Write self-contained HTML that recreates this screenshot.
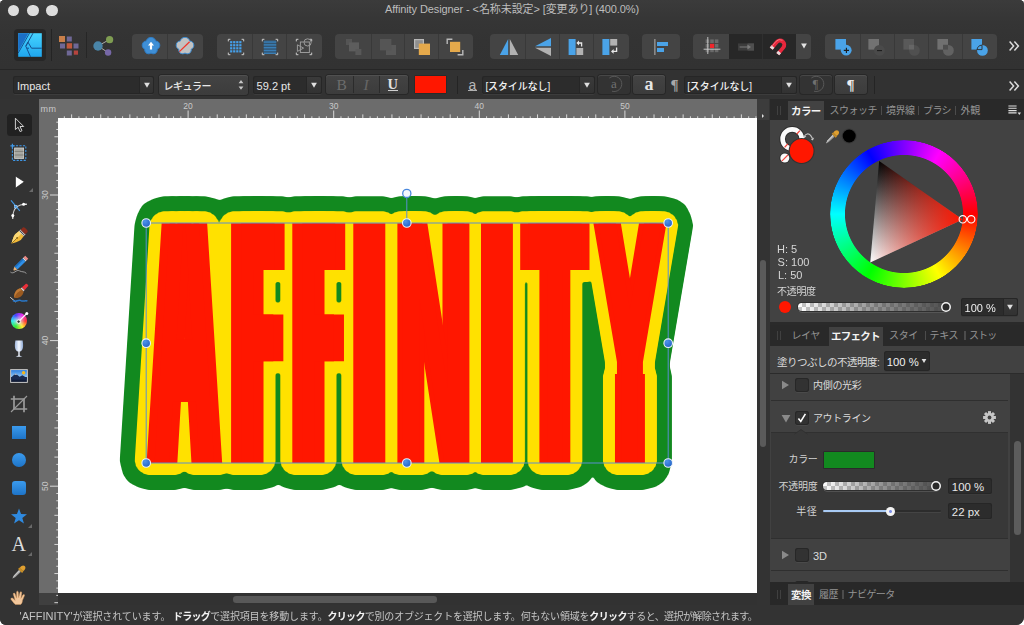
<!DOCTYPE html>
<html lang="ja"><head><meta charset="utf-8"><title>Affinity Designer</title>
<style>
html,body{margin:0;padding:0;background:#fff;}
body{width:1024px;height:625px;overflow:hidden;font-family:"Liberation Sans","Noto Sans CJK JP",sans-serif;}
#win{position:relative;width:1024px;height:625px;background:#333;border-radius:4.5px 4.5px 8px 6px;overflow:hidden;}
.abs{position:absolute;}
.t{position:absolute;white-space:nowrap;line-height:1;}
svg{display:block;overflow:visible}
.fld{background:#2c2c2c;border-radius:2.5px;box-shadow:inset 0 0 0 1px #262626,0 1px 0 #3c3c3c;}
.farr{background:linear-gradient(#3a3a3a,#323232);border-left:1px solid #262626;border-radius:0 2px 2px 0;box-sizing:border-box}
.rbtn{background:linear-gradient(#434343,#3c3c3c);border-radius:3px;box-shadow:inset 0 1px 0 #505050,0 0 0 1px #272727;}
.dbtn{background:#333;border-radius:3px;box-shadow:inset 0 1px 0 #474747,0 0 0 1px #272727;}
.chk{background:linear-gradient(90deg,rgba(62,62,62,0) 0,rgba(62,62,62,.55) 50%,rgba(62,62,62,.93) 100%),repeating-conic-gradient(#c6c6c6 0 25%,#fff 0 50%) 0 0/8px 8px;box-shadow:0 0 0 1px #2f2f2f,0 2px 0 -0.5px #6a6a6a;}
#status b{color:#f4f4f4;font-weight:bold}

</style></head>
<body>
<div id="win">
<div class="abs" style="left:0;top:0;width:1024px;height:69px;background:linear-gradient(#3b3b3b,#353535 22px,#333 40px,#323232)"></div>
<div class="abs" style="left:7.7px;top:4.7px;width:11.8px;height:11.8px;border-radius:50%;background:#dddddd"></div>
<div class="abs" style="left:26.8px;top:4.7px;width:11.8px;height:11.8px;border-radius:50%;background:#dddddd"></div>
<div class="abs" style="left:46px;top:4.7px;width:11.8px;height:11.8px;border-radius:50%;background:#dddddd"></div>
<div class="t" id="title" style="left:0;width:1024px;text-align:center;top:4px;font-size:11px;color:#bdbdbd;letter-spacing:-0.1px">Affinity Designer - &lt;名称未設定&gt; [変更あり] (400.0%)</div>
<div class="abs" style="left:0;top:69px;width:1024px;height:1px;background:#262626"></div>
<div class="abs" style="left:0;top:70px;width:1024px;height:29px;background:#323232"></div>

<div class="abs" style="left:13.5px;top:29px;width:32px;height:32px;background:#262626;border-radius:4px"></div>
<svg class="abs" style="left:17.7px;top:33.2px" width="24" height="24" viewBox="-12.0 -12.0 24 24"><defs><linearGradient id="pg" x1="0" y1="0" x2="0" y2="1"><stop offset="0" stop-color="#46d4ff"/><stop offset="1" stop-color="#1fa6ee"/></linearGradient></defs>
<rect x="-11.8" y="-11.8" width="23.6" height="23.6" fill="url(#pg)"/>
<path d="M-11.8 -11.8H-1.5L-11.8 6.5Z" fill="#1b6fc6"/>
<path d="M-11.8 8L-0.5 -11.8M3 -11.8L-4.2 1.2L0.5 11.8M-4.2 1.2L-2 -2.8L1.5 3.2H11.8M-1 3.2H-3.2" fill="none" stroke="#14508f" stroke-width="1" stroke-linejoin="round"/></svg>
<div class="abs" style="left:50.8px;top:29px;width:1px;height:32px;background:#242424"></div>
<div class="abs" style="left:85.6px;top:32px;width:1px;height:26px;background:#262626"></div>
<svg class="abs" style="left:58.2px;top:34.5px" width="22" height="22" viewBox="-11.0 -11.0 22 22"><rect x="-10" y="-10" width="6" height="6" fill="#c87f4a"/><rect x="-2.2" y="-9.5" width="5" height="5" fill="#6f6896"/><rect x="-9" y="-2.5" width="5" height="5" fill="#6f6896"/><rect x="-2.3" y="-2.8" width="5.4" height="5.4" fill="#c0593c"/><rect x="4.5" y="-2.5" width="5" height="5" fill="#6f6896"/><rect x="-2.2" y="4.5" width="5" height="5" fill="#6f6896"/><rect x="4.8" y="4.5" width="4.2" height="4.2" fill="#b5443e"/></svg>
<svg class="abs" style="left:91.5px;top:34.5px" width="22" height="22" viewBox="-11.0 -11.0 22 22"><path d="M-5 0L6.5 -6.5M-5 0L5 6.5" stroke="#aaa" stroke-width="1" fill="none"/>
<circle cx="-5" cy="0" r="4.7" fill="#4a85a8"/><circle cx="6.6" cy="-6.3" r="3.6" fill="#7f9d52"/><circle cx="5.1" cy="6.5" r="3.2" fill="#7667a6"/></svg>
<div class="abs" style="left:132px;top:34px;width:71px;height:25px;background:#444444;border-radius:4px"></div>
<div class="abs" style="left:167.0px;top:34px;width:1px;height:25px;background:#393939"></div>
<svg class="abs" style="left:140.8px;top:36.2px" width="20" height="20" viewBox="-10.0 -10.0 20 20"><path d="M0 -8.6C2.6 -8.6 4.4 -7 4.6 -5C7 -5 8.8 -3.2 8.8 -0.8C8.8 1.2 7.6 2.6 6.2 3.2C6.6 5.8 4.8 7.8 2.4 7.8C1.4 7.8 0.6 7.5 0 7C-0.6 7.5 -1.4 7.8 -2.4 7.8C-4.8 7.8 -6.6 5.8 -6.2 3.2C-7.6 2.6 -8.8 1.2 -8.8 -0.8C-8.8 -3.2 -7 -5 -4.6 -5C-4.4 -7 -2.6 -8.6 0 -8.6Z" fill="#3f8fd6" stroke="#2f7cc4" stroke-width="1"/><path d="M0 -4.2L3 -0.4H1.1V3.6H-1.1V-0.4H-3Z" fill="#fff"/></svg>
<svg class="abs" style="left:174.8px;top:36.2px" width="20" height="20" viewBox="-10.0 -10.0 20 20"><path d="M0 -8.6C2.6 -8.6 4.4 -7 4.6 -5C7 -5 8.8 -3.2 8.8 -0.8C8.8 1.2 7.6 2.6 6.2 3.2C6.6 5.8 4.8 7.8 2.4 7.8C1.4 7.8 0.6 7.5 0 7C-0.6 7.5 -1.4 7.8 -2.4 7.8C-4.8 7.8 -6.6 5.8 -6.2 3.2C-7.6 2.6 -8.8 1.2 -8.8 -0.8C-8.8 -3.2 -7 -5 -4.6 -5C-4.4 -7 -2.6 -8.6 0 -8.6Z" fill="#c2c2c2" stroke="#3f8fd6" stroke-width="1"/><path d="M-5.6 5.6L4.6 -4.2" stroke="#f0352b" stroke-width="1.3"/></svg>
<div class="abs" style="left:216.5px;top:34px;width:105.0px;height:25px;background:#444444;border-radius:4px"></div>
<div class="abs" style="left:252.0px;top:34px;width:1px;height:25px;background:#393939"></div>
<div class="abs" style="left:286.0px;top:34px;width:1px;height:25px;background:#393939"></div>
<svg class="abs" style="left:226.2px;top:36.5px" width="20" height="20" viewBox="-10.0 -10.0 20 20"><path d="M-7.7 -5.6V-7.7H-5.6M5.6 -7.7H7.7V-5.6M7.7 5.6V7.7H5.6M-5.6 7.7H-7.7V5.6" fill="none" stroke="#cdcdcd" stroke-width="1"/><rect x="-5.90" y="-5.90" width="2.2" height="2.2" fill="#45a0ea"/><rect x="-5.90" y="-2.85" width="2.2" height="2.2" fill="#45a0ea"/><rect x="-5.90" y="0.20" width="2.2" height="2.2" fill="#45a0ea"/><rect x="-5.90" y="3.25" width="2.2" height="2.2" fill="#45a0ea"/><rect x="-2.85" y="-5.90" width="2.2" height="2.2" fill="#45a0ea"/><rect x="-2.85" y="-2.85" width="2.2" height="2.2" fill="#45a0ea"/><rect x="-2.85" y="0.20" width="2.2" height="2.2" fill="#45a0ea"/><rect x="-2.85" y="3.25" width="2.2" height="2.2" fill="#45a0ea"/><rect x="0.20" y="-5.90" width="2.2" height="2.2" fill="#45a0ea"/><rect x="0.20" y="-2.85" width="2.2" height="2.2" fill="#45a0ea"/><rect x="0.20" y="0.20" width="2.2" height="2.2" fill="#45a0ea"/><rect x="0.20" y="3.25" width="2.2" height="2.2" fill="#45a0ea"/><rect x="3.25" y="-5.90" width="2.2" height="2.2" fill="#45a0ea"/><rect x="3.25" y="-2.85" width="2.2" height="2.2" fill="#45a0ea"/><rect x="3.25" y="0.20" width="2.2" height="2.2" fill="#45a0ea"/><rect x="3.25" y="3.25" width="2.2" height="2.2" fill="#45a0ea"/></svg>
<svg class="abs" style="left:260.0px;top:36.5px" width="20" height="20" viewBox="-10.0 -10.0 20 20"><path d="M-7.7 -5.6V-7.7H-5.6M5.6 -7.7H7.7V-5.6M7.7 5.6V7.7H5.6M-5.6 7.7H-7.7V5.6" fill="none" stroke="#cdcdcd" stroke-width="1"/><rect x="-6.3" y="-6.3" width="12.6" height="12.6" fill="#2f4356"/><rect x="-6.3" y="-6.20" width="12.6" height="0.8" fill="#3d8fd0"/><rect x="-6.3" y="-4.65" width="12.6" height="0.8" fill="#3d8fd0"/><rect x="-6.3" y="-3.10" width="12.6" height="0.8" fill="#3d8fd0"/><rect x="-6.3" y="-1.55" width="12.6" height="0.8" fill="#3d8fd0"/><rect x="-6.3" y="0.00" width="12.6" height="0.8" fill="#3d8fd0"/><rect x="-6.3" y="1.55" width="12.6" height="0.8" fill="#3d8fd0"/><rect x="-6.3" y="3.10" width="12.6" height="0.8" fill="#3d8fd0"/><rect x="-6.3" y="4.65" width="12.6" height="0.8" fill="#3d8fd0"/><rect x="-6.3" y="6.20" width="12.6" height="0.8" fill="#3d8fd0"/></svg>
<svg class="abs" style="left:293.6px;top:36.5px" width="20" height="20" viewBox="-10.0 -10.0 20 20"><path d="M-7.7 -5.6V-7.7H-5.6M5.6 -7.7H7.7V-5.6M7.7 5.6V7.7H5.6M-5.6 7.7H-7.7V5.6" fill="none" stroke="#cdcdcd" stroke-width="1"/><g fill="none" stroke="#9a9a9a" stroke-width="1"><rect x="-3.6" y="-5" width="9" height="10.5"/><circle cx="3.6" cy="-4.6" r="3.6"/><path d="M-6.6 -2.2V4.4L-0.4 1.1Z"/></g></svg>
<div class="abs" style="left:335px;top:34px;width:138px;height:25px;background:#444444;border-radius:4px"></div>
<div class="abs" style="left:370.5px;top:34px;width:1px;height:25px;background:#393939"></div>
<div class="abs" style="left:404.1px;top:34px;width:1px;height:25px;background:#393939"></div>
<div class="abs" style="left:438.0px;top:34px;width:1px;height:25px;background:#393939"></div>
<svg class="abs" style="left:344.0px;top:36.5px" width="20" height="20" viewBox="-10.0 -10.0 20 20"><rect x="-8" y="-8" width="6" height="6" fill="#555"/><rect x="-5" y="-4.6" width="10" height="9" fill="#5d5d5d"/><rect x="1.4" y="2" width="6" height="6" fill="#585858"/></svg>
<svg class="abs" style="left:377.8px;top:36.5px" width="20" height="20" viewBox="-10.0 -10.0 20 20"><rect x="-2" y="-2" width="10" height="10" fill="#585858"/><rect x="-8" y="-8" width="11.4" height="11.4" fill="#555555"/></svg>
<svg class="abs" style="left:411.5px;top:36.5px" width="20" height="20" viewBox="-10.0 -10.0 20 20"><rect x="-8" y="-8" width="10" height="10" fill="#b9b9b9"/><rect x="-6.8" y="-6.8" width="7.6" height="7.6" fill="#8f8f8f"/><rect x="-3.2" y="-3.4" width="11.2" height="11.4" fill="#e5a94b"/></svg>
<svg class="abs" style="left:445.2px;top:36.5px" width="20" height="20" viewBox="-10.0 -10.0 20 20"><path d="M-7.8 -3V-7.8H-2.6M7.8 3V7.8H2.6" fill="none" stroke="#b9b9b9" stroke-width="1.4"/><rect x="-5" y="-5.2" width="10.2" height="10.2" fill="#e5a94b"/></svg>
<div class="abs" style="left:490px;top:34px;width:138.5px;height:25px;background:#444444;border-radius:4px"></div>
<div class="abs" style="left:525.0px;top:34px;width:1px;height:25px;background:#393939"></div>
<div class="abs" style="left:559.0px;top:34px;width:1px;height:25px;background:#393939"></div>
<div class="abs" style="left:593.0px;top:34px;width:1px;height:25px;background:#393939"></div>
<svg class="abs" style="left:499.0px;top:36.5px" width="20" height="20" viewBox="-10.0 -10.0 20 20"><path d="M-0.8 -8V8H-9.2Z" fill="#4aa3e8"/><path d="M0.8 -8V8H9.2Z" fill="#b2b2b2"/></svg>
<svg class="abs" style="left:533.2px;top:36.8px" width="20" height="20" viewBox="-10.0 -10.0 20 20"><path d="M8 -0.8H-8L8 -9Z" fill="#4aa3e8"/><path d="M8 0.8H-8L8 9Z" fill="#b2b2b2"/></svg>
<svg class="abs" style="left:566.0px;top:36.5px" width="20" height="20" viewBox="-10.0 -10.0 20 20"><rect x="-7.4" y="-8" width="7" height="16" fill="#4aa3e8"/><rect x="0.4" y="1" width="6.8" height="7" fill="#b2b2b2"/><path d="M5.6 -0.6V-4H2" fill="none" stroke="#e8e8e8" stroke-width="1.3"/><path d="M3 -6.4V-1.6L0.4 -4Z" fill="#e8e8e8"/></svg>
<svg class="abs" style="left:599.8px;top:36.5px" width="20" height="20" viewBox="-10.0 -10.0 20 20"><rect x="-7.6" y="-8" width="7" height="16" fill="#4aa3e8"/><rect x="0.2" y="-8" width="7" height="6.6" fill="#b2b2b2"/><path d="M6.6 0.6V4.4H2.6" fill="none" stroke="#e8e8e8" stroke-width="1.3"/><path d="M3.6 2V6.8L1 4.4Z" fill="#e8e8e8"/></svg>
<div class="abs" style="left:642px;top:34px;width:37.5px;height:25px;background:#444444;border-radius:4px"></div>
<svg class="abs" style="left:650.8px;top:36.5px" width="20" height="20" viewBox="-10.0 -10.0 20 20"><rect x="-6.8" y="-8" width="1.3" height="16" fill="#9a9a9a"/><rect x="-4" y="-5" width="11" height="4" fill="#4aa3e8"/><rect x="-4" y="1" width="7" height="4" fill="#4aa3e8"/></svg>
<div class="abs" style="left:693px;top:34px;width:118px;height:25px;background:#444444;border-radius:4px"></div>
<div class="abs" style="left:729px;top:34px;width:67px;height:25px;background:#272727"></div>
<div class="abs" style="left:762px;top:34px;width:1px;height:25px;background:#2f2f2f"></div>
<svg class="abs" style="left:702.0px;top:36.2px" width="20" height="20" viewBox="-10.0 -10.0 20 20"><rect x="-6.4" y="-6.6" width="3.6" height="3.6" fill="#6a6a6a"/><rect x="-6.4" y="-2.0" width="3.6" height="3.6" fill="#6a6a6a"/><rect x="-6.4" y="2.6" width="3.6" height="3.6" fill="#6a6a6a"/><rect x="-1.8" y="-6.6" width="3.6" height="3.6" fill="#6a6a6a"/><rect x="-1.8" y="-2.0" width="3.6" height="3.6" fill="#6a6a6a"/><rect x="-1.8" y="2.6" width="3.6" height="3.6" fill="#6a6a6a"/><rect x="2.8" y="-6.6" width="3.6" height="3.6" fill="#6a6a6a"/><rect x="2.8" y="-2.0" width="3.6" height="3.6" fill="#6a6a6a"/><rect x="2.8" y="2.6" width="3.6" height="3.6" fill="#6a6a6a"/><rect x="-2" y="-2.2" width="4.2" height="4.2" fill="#f0252b"/><path d="M-4.2 -9V8M-8.4 3.2H8.4" stroke="#cfcfcf" stroke-width="0.9" fill="none"/></svg>
<svg class="abs" style="left:735.5px;top:36.5px" width="20" height="20" viewBox="-10.0 -10.0 20 20"><rect x="-8" y="-3.6" width="16" height="7.2" fill="#3c3c3c"/><rect x="1.6" y="-3.6" width="6.4" height="7.2" fill="#4f4f4f"/><path d="M-6.4 0H3" stroke="#7c7c7c" stroke-width="1"/><path d="M1.4 -2.6L5 0L1.4 2.6Z" fill="#7c7c7c"/></svg>
<svg class="abs" style="left:768.8px;top:36.3px" width="20" height="20" viewBox="-10.0 -10.0 20 20"><g transform="rotate(40)"><path d="M-6.2 7V-1.6A6.2 6.2 0 0 1 6.2 -1.6V7H2.4V-1.4A2.4 2.4 0 0 0 -2.4 -1.4V7Z" fill="#e8273c"/><path d="M-6.2 7V4.2H-2.4V7ZM6.2 7V4.2H2.4V7Z" fill="#e6dede"/><path d="M-5.2 5V-1.6A5.2 5.2 0 0 1 -1 -6.6" stroke="#f4707c" stroke-width="0.9" fill="none"/></g></svg>
<svg class="abs" style="left:793.6px;top:35.8px" width="20" height="20" viewBox="-10.0 -10.0 20 20"><path d="M-2.9 -2.4H2.9L0 2.6Z" fill="#e2e2e2"/></svg>
<div class="abs" style="left:825px;top:34px;width:172px;height:25px;background:#444444;border-radius:4px"></div>
<div class="abs" style="left:859.5px;top:34px;width:1px;height:25px;background:#393939"></div>
<div class="abs" style="left:893.5px;top:34px;width:1px;height:25px;background:#393939"></div>
<div class="abs" style="left:927.5px;top:34px;width:1px;height:25px;background:#393939"></div>
<div class="abs" style="left:961.5px;top:34px;width:1px;height:25px;background:#393939"></div>
<svg class="abs" style="left:832.8px;top:36.5px" width="20" height="20" viewBox="-10.0 -10.0 20 20"><rect x="-7.6" y="-8" width="10.6" height="10.6" fill="#4aa3e8"/><circle cx="3.2" cy="3.2" r="5.4" fill="#4aa3e8"/><path d="M0.8 3.4H6M3.4 0.8V6" stroke="#1c1c1c" stroke-width="1.1"/></svg>
<svg class="abs" style="left:866.4px;top:36.5px" width="20" height="20" viewBox="-10.0 -10.0 20 20"><rect x="-7.6" y="-8" width="10.6" height="10.6" fill="#727272"/><circle cx="3.4" cy="3.4" r="5.4" fill="#4a4a4a"/><path d="M1 3.6H6" stroke="#1c1c1c" stroke-width="1.1"/></svg>
<svg class="abs" style="left:901.4px;top:36.5px" width="20" height="20" viewBox="-10.0 -10.0 20 20"><rect x="-7.6" y="-8" width="10.6" height="10.6" fill="#595959"/><circle cx="3.4" cy="3.4" r="5.4" fill="#505050"/><path d="M-2 3V-2.2H3V2.6H-2Z" fill="#666"/></svg>
<svg class="abs" style="left:935.0px;top:36.5px" width="20" height="20" viewBox="-10.0 -10.0 20 20"><rect x="-7.6" y="-8" width="10.6" height="10.6" fill="#707070"/><circle cx="3.4" cy="3.4" r="5.4" fill="#626262"/><path d="M-2 2.6V-2.2H3V2.6Z" fill="#4e4e4e"/></svg>
<svg class="abs" style="left:969.0px;top:36.5px" width="20" height="20" viewBox="-10.0 -10.0 20 20"><rect x="-7.6" y="-8" width="10.6" height="10.6" fill="#4aa3e8"/><circle cx="3.4" cy="3.4" r="5.4" fill="#4aa3e8"/><path d="M-2 2.8A5.4 5.4 0 0 1 3 -1.9V2.6H-2Z" fill="none" stroke="#2b2b2b" stroke-width="0.9"/></svg>
<svg class="abs" style="left:1008.3px;top:40.2px" width="12" height="12" viewBox="-6.0 -6.0 12 12"><path d="M-4.4 -4.4L-0.4 0L-4.4 4.4M0.4 -4.4L4.4 0L0.4 4.4" fill="none" stroke="#dcdcdc" stroke-width="1.5"/></svg>
<svg class="abs" style="left:1008.3px;top:80.0px" width="12" height="12" viewBox="-6.0 -6.0 12 12"><path d="M-4.4 -4.4L-0.4 0L-4.4 4.4M0.4 -4.4L4.4 0L0.4 4.4" fill="none" stroke="#dcdcdc" stroke-width="1.5"/></svg>

<div class="abs fld" style="left:12.5px;top:75.5px;width:141.5px;height:18.0px"></div>
<div class="abs farr" style="left:139px;top:76.5px;width:14px;height:16.0px"></div>
<svg class="abs" style="left:142.5px;top:80.8px" width="8" height="8" viewBox="-4 -4 8 8"><path d="M-2.9 -2.3H2.9L0 2.7Z" fill="#e0e0e0"/></svg>
<div class="t" id="c_font" style="left:17px;top:85.7px;font-size:11px;color:#e8e8e8;line-height:0;">Impact</div>
<div class="abs rbtn" style="left:158.5px;top:74.5px;width:89.5px;height:20.0px"></div>
<div class="t" id="c_style" style="left:163.6px;top:86.5px;font-size:10px;color:#e8e8e8;line-height:0;letter-spacing:-0.5px;font-weight:500">レギュラー</div>
<svg class="abs" style="left:237px;top:78px" width="8" height="14" viewBox="0 0 8 14"><path d="M1.6 5.2L4 2L6.4 5.2ZM1.6 8.6L4 11.8L6.4 8.6Z" fill="#c8c8c8"/></svg>
<div class="abs fld" style="left:253px;top:75.5px;width:69px;height:18.0px"></div>
<div class="abs farr" style="left:306px;top:76.5px;width:15px;height:16.0px"></div>
<svg class="abs" style="left:310.0px;top:80.8px" width="8" height="8" viewBox="-4 -4 8 8"><path d="M-2.9 -2.3H2.9L0 2.7Z" fill="#e0e0e0"/></svg>
<div class="t" id="c_size" style="left:256.6px;top:85.7px;font-size:11px;color:#e8e8e8;line-height:0;">59.2 pt</div>
<div class="abs rbtn" style="left:325.5px;top:74.5px;width:82.0px;height:19.0px"></div>
<div class="abs" style="left:353px;top:75.5px;width:1px;height:17px;background:#2b2b2b"></div>
<div class="abs" style="left:379px;top:75.5px;width:1px;height:17px;background:#2b2b2b"></div>
<div class="t" style="left:336.5px;top:84.6px;line-height:0;font-family:'Liberation Serif',serif;font-size:15.5px;color:#6c6c6c">B</div>
<div class="t" style="left:363.5px;top:84.6px;line-height:0;font-family:'Liberation Serif',serif;font-size:15.5px;font-style:italic;color:#666">I</div>
<div class="t" style="left:387.5px;top:84.4px;line-height:0;font-family:'Liberation Serif',serif;font-size:14.5px;font-weight:bold;color:#e0e0e0">U</div>
<div class="abs" style="left:388px;top:90px;width:10px;height:1px;background:#cfcfcf"></div>
<div class="abs" style="left:413.5px;top:75px;width:33.5px;height:19px;background:#2a2a2a;border-radius:2px"></div>
<div class="abs" style="left:414.5px;top:76px;width:31.5px;height:16.6px;background:#ff1700"></div>
<div class="abs" style="left:457px;top:76px;width:1px;height:18px;background:#242424"></div>
<div class="t" style="left:468.4px;top:85px;line-height:0;font-size:14px;color:#b8b8b8">a</div>
<div class="abs" style="left:468px;top:90.4px;width:9px;height:1px;background:#b0b0b0"></div>
<div class="abs fld" style="left:482px;top:75.5px;width:113px;height:18.0px"></div>
<div class="abs farr" style="left:579px;top:76.5px;width:15px;height:16.0px"></div>
<svg class="abs" style="left:583.0px;top:80.8px" width="8" height="8" viewBox="-4 -4 8 8"><path d="M-2.9 -2.3H2.9L0 2.7Z" fill="#e0e0e0"/></svg>
<div class="t" id="c_cs" style="left:485.4px;top:86.8px;font-size:10px;color:#f2f2f2;line-height:0;letter-spacing:-0.1px;font-weight:500">[スタイルなし]</div>
<div class="abs dbtn" style="left:598px;top:74.5px;width:32px;height:19.5px"></div>
<svg class="abs" style="left:603px;top:75px" width="22" height="18" viewBox="-11 -9 22 18"><path d="M-4.6 -6A7.6 7.6 0 1 1 -2 7.2" fill="none" stroke="#5c5c5c" stroke-width="0.9"/><text x="0" y="4" text-anchor="middle" font-family="Liberation Serif,serif" font-size="13" fill="#707070">a</text></svg>
<div class="abs rbtn" style="left:633px;top:74.5px;width:31.5px;height:19.5px"></div>
<div class="t" style="left:644.6px;top:83.6px;line-height:0;font-family:'Liberation Serif',serif;font-size:18px;font-weight:bold;color:#e6e6e6">a</div>
<div class="t" style="left:670.4px;top:84.8px;line-height:0;font-family:'Liberation Serif',serif;font-size:15px;font-weight:bold;color:#a8a8a8">¶</div>
<div class="abs fld" style="left:684px;top:75.5px;width:113px;height:18.0px"></div>
<div class="abs farr" style="left:781px;top:76.5px;width:15px;height:16.0px"></div>
<svg class="abs" style="left:785.0px;top:80.8px" width="8" height="8" viewBox="-4 -4 8 8"><path d="M-2.9 -2.3H2.9L0 2.7Z" fill="#e0e0e0"/></svg>
<div class="t" id="c_ps" style="left:687.2px;top:86.8px;font-size:10px;color:#f2f2f2;line-height:0;letter-spacing:-0.1px;font-weight:500">[スタイルなし]</div>
<div class="abs dbtn" style="left:800px;top:74.5px;width:32px;height:19.5px"></div>
<svg class="abs" style="left:805px;top:75px" width="22" height="18" viewBox="-11 -9 22 18"><path d="M-4.6 -6A7.6 7.6 0 1 1 -2 7.2" fill="none" stroke="#5c5c5c" stroke-width="0.9"/><text x="-0.5" y="4" text-anchor="middle" font-family="Liberation Serif,serif" font-size="12" fill="#707070">¶</text></svg>
<div class="abs rbtn" style="left:835px;top:74.5px;width:31.5px;height:19.5px"></div>
<div class="t" style="left:846.6px;top:84.8px;line-height:0;font-family:'Liberation Serif',serif;font-size:15px;font-weight:bold;color:#ececec">¶</div>
<div class="abs" style="left:874.3px;top:76px;width:1px;height:18px;background:#242424"></div>

<div class="abs" style="left:0;top:99px;width:38px;height:506px;background:#333"></div>
<div class="abs" style="left:38.6px;top:99px;width:718px;height:19px;background:#6c6c6c"></div>
<div class="abs" style="left:38.6px;top:99px;width:19.4px;height:494px;background:#6c6c6c"></div>
<div class="abs" style="left:38.6px;top:593px;width:19.4px;height:12px;background:#3f3f3f"></div>
<div class="abs" style="left:58px;top:118px;width:698.6px;height:475px;background:#fff"></div>
<svg class="abs" style="left:0;top:0" width="1024" height="625"><path d="M64.34 116.3V118M71.62 114.4V118M78.90 116.3V118M86.18 116.3V118M93.46 116.3V118M100.74 114.4V118M108.02 116.3V118M115.30 116.3V118M122.58 116.3V118M129.86 114.4V118M137.14 116.3V118M144.42 116.3V118M151.70 116.3V118M158.98 114.4V118M166.26 116.3V118M173.54 116.3V118M180.82 116.3V118M188.10 110.5V118M195.38 116.3V118M202.66 116.3V118M209.94 116.3V118M217.22 114.4V118M224.50 116.3V118M231.78 116.3V118M239.06 116.3V118M246.34 114.4V118M253.62 116.3V118M260.90 116.3V118M268.18 116.3V118M275.46 114.4V118M282.74 116.3V118M290.02 116.3V118M297.30 116.3V118M304.58 114.4V118M311.86 116.3V118M319.14 116.3V118M326.42 116.3V118M333.70 110.5V118M340.98 116.3V118M348.26 116.3V118M355.54 116.3V118M362.82 114.4V118M370.10 116.3V118M377.38 116.3V118M384.66 116.3V118M391.94 114.4V118M399.22 116.3V118M406.50 116.3V118M413.78 116.3V118M421.06 114.4V118M428.34 116.3V118M435.62 116.3V118M442.90 116.3V118M450.18 114.4V118M457.46 116.3V118M464.74 116.3V118M472.02 116.3V118M479.30 110.5V118M486.58 116.3V118M493.86 116.3V118M501.14 116.3V118M508.42 114.4V118M515.70 116.3V118M522.98 116.3V118M530.26 116.3V118M537.54 114.4V118M544.82 116.3V118M552.10 116.3V118M559.38 116.3V118M566.66 114.4V118M573.94 116.3V118M581.22 116.3V118M588.50 116.3V118M595.78 114.4V118M603.06 116.3V118M610.34 116.3V118M617.62 116.3V118M624.90 110.5V118M632.18 116.3V118M639.46 116.3V118M646.74 116.3V118M654.02 114.4V118M661.30 116.3V118M668.58 116.3V118M675.86 116.3V118M683.14 114.4V118M690.42 116.3V118M697.70 116.3V118M704.98 116.3V118M712.26 114.4V118M719.54 116.3V118M726.82 116.3V118M734.10 116.3V118M741.38 114.4V118M748.66 116.3V118M755.94 116.3V118M56.3 122.20H58M56.3 129.48H58M54.4 136.76H58M56.3 144.04H58M56.3 151.32H58M56.3 158.60H58M54.4 165.88H58M56.3 173.16H58M56.3 180.44H58M56.3 187.72H58M50.0 195.00H58M56.3 202.28H58M56.3 209.56H58M56.3 216.84H58M54.4 224.12H58M56.3 231.40H58M56.3 238.68H58M56.3 245.96H58M54.4 253.24H58M56.3 260.52H58M56.3 267.80H58M56.3 275.08H58M54.4 282.36H58M56.3 289.64H58M56.3 296.92H58M56.3 304.20H58M54.4 311.48H58M56.3 318.76H58M56.3 326.04H58M56.3 333.32H58M50.0 340.60H58M56.3 347.88H58M56.3 355.16H58M56.3 362.44H58M54.4 369.72H58M56.3 377.00H58M56.3 384.28H58M56.3 391.56H58M54.4 398.84H58M56.3 406.12H58M56.3 413.40H58M56.3 420.68H58M54.4 427.96H58M56.3 435.24H58M56.3 442.52H58M56.3 449.80H58M54.4 457.08H58M56.3 464.36H58M56.3 471.64H58M56.3 478.92H58M50.0 486.20H58M56.3 493.48H58M56.3 500.76H58M56.3 508.04H58M54.4 515.32H58M56.3 522.60H58M56.3 529.88H58M56.3 537.16H58M54.4 544.44H58M56.3 551.72H58M56.3 559.00H58M56.3 566.28H58M54.4 573.56H58M56.3 580.84H58M56.3 588.12H58M56.3 595.40H58M54.4 602.68H58" stroke="#e4e4e4" stroke-width="0.9" fill="none"/><g font-family="Liberation Sans, sans-serif" font-size="8.5" fill="#c9c9c9"><text x="188.1" y="108.6" text-anchor="middle">20</text><text x="333.7" y="108.6" text-anchor="middle">30</text><text x="479.3" y="108.6" text-anchor="middle">40</text><text x="624.9" y="108.6" text-anchor="middle">50</text><text transform="translate(48.2,195.0) rotate(-90)" text-anchor="middle">30</text><text transform="translate(48.2,340.6) rotate(-90)" text-anchor="middle">40</text><text transform="translate(48.2,486.2) rotate(-90)" text-anchor="middle">50</text><text x="40.6" y="112" font-size="9" letter-spacing="0.5">mm</text></g></svg>
<svg class="abs" style="left:0;top:0" width="1024" height="625" viewBox="0 0 1024 625">
<defs>
<filter id="th0" filterUnits="userSpaceOnUse" x="100" y="200" width="620" height="290" color-interpolation-filters="sRGB"><feOffset in="SourceGraphic" dx="-8.0" dy="0" result="a"/><feOffset in="SourceGraphic" dx="8.0" dy="0" result="b"/><feMerge><feMergeNode in="a"/><feMergeNode in="b"/><feMergeNode in="SourceGraphic"/></feMerge></filter>
<filter id="th1" filterUnits="userSpaceOnUse" x="100" y="200" width="620" height="290" color-interpolation-filters="sRGB"><feOffset in="SourceGraphic" dx="-10.3" dy="0" result="a"/><feOffset in="SourceGraphic" dx="10.3" dy="0" result="b"/><feMerge><feMergeNode in="a"/><feMergeNode in="b"/><feMergeNode in="SourceGraphic"/></feMerge></filter>
<filter id="th2" filterUnits="userSpaceOnUse" x="100" y="200" width="620" height="290" color-interpolation-filters="sRGB"><feOffset in="SourceGraphic" dx="-4.6" dy="0" result="a"/><feOffset in="SourceGraphic" dx="4.6" dy="0" result="b"/><feMerge><feMergeNode in="a"/><feMergeNode in="b"/><feMergeNode in="SourceGraphic"/></feMerge></filter>
<filter id="th3" filterUnits="userSpaceOnUse" x="100" y="200" width="620" height="290" color-interpolation-filters="sRGB"><feOffset in="SourceGraphic" dx="-8.2" dy="0" result="a"/><feOffset in="SourceGraphic" dx="8.2" dy="0" result="b"/><feMerge><feMergeNode in="a"/><feMergeNode in="b"/><feMergeNode in="SourceGraphic"/></feMerge></filter>
<filter id="th4" filterUnits="userSpaceOnUse" x="100" y="200" width="620" height="290" color-interpolation-filters="sRGB"><feOffset in="SourceGraphic" dx="-4.8" dy="0" result="a"/><feOffset in="SourceGraphic" dx="4.8" dy="0" result="b"/><feOffset in="SourceGraphic" dx="-7.199999999999999" dy="0" x="560" y="374" width="140" height="110" result="c"/><feOffset in="SourceGraphic" dx="7.199999999999999" dy="0" x="560" y="374" width="140" height="110" result="d"/><feMerge><feMergeNode in="a"/><feMergeNode in="b"/><feMergeNode in="c"/><feMergeNode in="d"/><feMergeNode in="SourceGraphic"/></feMerge></filter>
<filter id="outl" filterUnits="userSpaceOnUse" x="90" y="170" width="640" height="350" color-interpolation-filters="sRGB"><feOffset in="SourceAlpha" dx="11.60" dy="0.00" result="y0"/><feOffset in="SourceAlpha" dx="11.03" dy="3.58" result="y1"/><feOffset in="SourceAlpha" dx="9.38" dy="6.82" result="y2"/><feOffset in="SourceAlpha" dx="6.82" dy="9.38" result="y3"/><feOffset in="SourceAlpha" dx="3.58" dy="11.03" result="y4"/><feOffset in="SourceAlpha" dx="0.00" dy="11.60" result="y5"/><feOffset in="SourceAlpha" dx="-3.58" dy="11.03" result="y6"/><feOffset in="SourceAlpha" dx="-6.82" dy="9.38" result="y7"/><feOffset in="SourceAlpha" dx="-9.38" dy="6.82" result="y8"/><feOffset in="SourceAlpha" dx="-11.03" dy="3.58" result="y9"/><feOffset in="SourceAlpha" dx="-11.60" dy="0.00" result="y10"/><feOffset in="SourceAlpha" dx="-11.03" dy="-3.58" result="y11"/><feOffset in="SourceAlpha" dx="-9.38" dy="-6.82" result="y12"/><feOffset in="SourceAlpha" dx="-6.82" dy="-9.38" result="y13"/><feOffset in="SourceAlpha" dx="-3.58" dy="-11.03" result="y14"/><feOffset in="SourceAlpha" dx="-0.00" dy="-11.60" result="y15"/><feOffset in="SourceAlpha" dx="3.58" dy="-11.03" result="y16"/><feOffset in="SourceAlpha" dx="6.82" dy="-9.38" result="y17"/><feOffset in="SourceAlpha" dx="9.38" dy="-6.82" result="y18"/><feOffset in="SourceAlpha" dx="11.03" dy="-3.58" result="y19"/><feMerge result="Y0"><feMergeNode in="y0"/><feMergeNode in="y1"/><feMergeNode in="y2"/><feMergeNode in="y3"/><feMergeNode in="y4"/><feMergeNode in="y5"/><feMergeNode in="y6"/><feMergeNode in="y7"/><feMergeNode in="y8"/><feMergeNode in="y9"/><feMergeNode in="y10"/><feMergeNode in="y11"/><feMergeNode in="y12"/><feMergeNode in="y13"/><feMergeNode in="y14"/><feMergeNode in="y15"/><feMergeNode in="y16"/><feMergeNode in="y17"/><feMergeNode in="y18"/><feMergeNode in="y19"/><feMergeNode in="SourceAlpha"/></feMerge><feGaussianBlur in="Y0" stdDeviation="0.9"/><feComponentTransfer result="Y"><feFuncA type="linear" slope="3" intercept="-1"/></feComponentTransfer><feOffset in="Y" dx="15.00" dy="0.00" result="g0"/><feOffset in="Y" dx="14.49" dy="3.88" result="g1"/><feOffset in="Y" dx="12.99" dy="7.50" result="g2"/><feOffset in="Y" dx="10.61" dy="10.61" result="g3"/><feOffset in="Y" dx="7.50" dy="12.99" result="g4"/><feOffset in="Y" dx="3.88" dy="14.49" result="g5"/><feOffset in="Y" dx="0.00" dy="15.00" result="g6"/><feOffset in="Y" dx="-3.88" dy="14.49" result="g7"/><feOffset in="Y" dx="-7.50" dy="12.99" result="g8"/><feOffset in="Y" dx="-10.61" dy="10.61" result="g9"/><feOffset in="Y" dx="-12.99" dy="7.50" result="g10"/><feOffset in="Y" dx="-14.49" dy="3.88" result="g11"/><feOffset in="Y" dx="-15.00" dy="0.00" result="g12"/><feOffset in="Y" dx="-14.49" dy="-3.88" result="g13"/><feOffset in="Y" dx="-12.99" dy="-7.50" result="g14"/><feOffset in="Y" dx="-10.61" dy="-10.61" result="g15"/><feOffset in="Y" dx="-7.50" dy="-12.99" result="g16"/><feOffset in="Y" dx="-3.88" dy="-14.49" result="g17"/><feOffset in="Y" dx="-0.00" dy="-15.00" result="g18"/><feOffset in="Y" dx="3.88" dy="-14.49" result="g19"/><feOffset in="Y" dx="7.50" dy="-12.99" result="g20"/><feOffset in="Y" dx="10.61" dy="-10.61" result="g21"/><feOffset in="Y" dx="12.99" dy="-7.50" result="g22"/><feOffset in="Y" dx="14.49" dy="-3.88" result="g23"/><feMerge result="G0"><feMergeNode in="g0"/><feMergeNode in="g1"/><feMergeNode in="g2"/><feMergeNode in="g3"/><feMergeNode in="g4"/><feMergeNode in="g5"/><feMergeNode in="g6"/><feMergeNode in="g7"/><feMergeNode in="g8"/><feMergeNode in="g9"/><feMergeNode in="g10"/><feMergeNode in="g11"/><feMergeNode in="g12"/><feMergeNode in="g13"/><feMergeNode in="g14"/><feMergeNode in="g15"/><feMergeNode in="g16"/><feMergeNode in="g17"/><feMergeNode in="g18"/><feMergeNode in="g19"/><feMergeNode in="g20"/><feMergeNode in="g21"/><feMergeNode in="g22"/><feMergeNode in="g23"/><feMergeNode in="Y"/></feMerge><feGaussianBlur in="G0" stdDeviation="0.9"/><feComponentTransfer result="G"><feFuncA type="linear" slope="3" intercept="-1"/></feComponentTransfer><feFlood flood-color="#12891f"/><feComposite in2="G" operator="in" result="GC"/><feFlood flood-color="#ffe100"/><feComposite in2="Y" operator="in" result="YC"/><feMerge><feMergeNode in="GC"/><feMergeNode in="YC"/><feMergeNode in="SourceGraphic"/></feMerge></filter>
<clipPath id="clipA"><rect x="100" y="223.2" width="200" height="300"/></clipPath>
<radialGradient id="hg" cx="0.35" cy="0.3" r="0.8"><stop offset="0" stop-color="#4f94ea"/><stop offset="1" stop-color="#1f5fc4"/></radialGradient>
</defs>
<g filter="url(#outl)" font-family="DejaVu Sans, Liberation Sans, sans-serif" font-weight="bold" font-size="2048" fill="#ff1700">
<g filter="url(#th0)"><g clip-path="url(#clipA)"><text transform="translate(154.22,463.0) scale(0.03808,0.22486)">A</text></g></g>
<g filter="url(#th1)"><text transform="translate(235.04,463.0) scale(0.03224,0.16062)">F</text></g>
<g filter="url(#th1)"><text transform="translate(296.35,463.0) scale(0.03167,0.16062)">F</text></g>
<text transform="translate(337.67,463.0) scale(0.08312,0.16062)">I</text>
<g filter="url(#th2)"><text transform="translate(393.69,463.0) scale(0.04634,0.16062)">N</text></g>
<text transform="translate(465.42,463.0) scale(0.08286,0.16062)">I</text>
<g filter="url(#th3)"><text transform="translate(527.81,463.0) scale(0.03874,0.16062)">T</text></g>
<g filter="url(#th4)"><text transform="translate(599.23,463.0) scale(0.04143,0.16062)">Y</text></g>
</g>
<path d="M146.2 223.0H668.2V463.0H146.2ZM406.8 223.0V197" fill="none" stroke="#5a8ed0" stroke-width="1"/>
<circle cx="146.2" cy="223.0" r="4.3" fill="url(#hg)" stroke="#eef3fb" stroke-width="1.1"/>
<circle cx="146.2" cy="463.0" r="4.3" fill="url(#hg)" stroke="#eef3fb" stroke-width="1.1"/>
<circle cx="406.8" cy="223.0" r="4.3" fill="url(#hg)" stroke="#eef3fb" stroke-width="1.1"/>
<circle cx="406.8" cy="463.0" r="4.3" fill="url(#hg)" stroke="#eef3fb" stroke-width="1.1"/>
<circle cx="668.2" cy="223.0" r="4.3" fill="url(#hg)" stroke="#eef3fb" stroke-width="1.1"/>
<circle cx="668.2" cy="463.0" r="4.3" fill="url(#hg)" stroke="#eef3fb" stroke-width="1.1"/>
<circle cx="146.2" cy="343.2" r="4.3" fill="url(#hg)" stroke="#eef3fb" stroke-width="1.1"/>
<circle cx="668.2" cy="343.2" r="4.3" fill="url(#hg)" stroke="#eef3fb" stroke-width="1.1"/>
<circle cx="406.8" cy="193.4" r="4.1" fill="#f2f7ff" stroke="#4a88de" stroke-width="1.3"/>
</svg>

<div class="abs" style="left:7px;top:113.7px;width:25px;height:22.6px;background:#212121;border-radius:3.5px"></div>
<svg class="abs" style="left:7.0px;top:113.0px" width="24" height="24" viewBox="-12.0 -12.0 24 24"><path d="M-3.6 -6.8V4.6L-0.9 2.2L1.1 6.6L3 5.7L1 1.5H4.7Z" fill="#262626" stroke="#cfcfcf" stroke-width="1" stroke-linejoin="round"/></svg>
<svg class="abs" style="left:7.0px;top:141.2px" width="24" height="24" viewBox="-12.0 -12.0 24 24"><rect x="-6.6" y="-7.2" width="13.4" height="14.6" fill="none" stroke="#3f97e6" stroke-width="1.1" stroke-dasharray="2.2 1.3"/><rect x="-4.4" y="-5" width="9" height="10.4" fill="#a9a9a4" stroke="#d4d4d0" stroke-width="0.8"/><path d="M-4.4 -1.6H4.6M-4.4 2H4.6" stroke="#77776f" stroke-width="0.8"/><path d="M-8.6 -7.2H-4.6M-6.6 -9.2V-5.2" stroke="#3f97e6" stroke-width="1.2"/></svg>
<svg class="abs" style="left:7.0px;top:169.5px" width="24" height="24" viewBox="-12.0 -12.0 24 24"><path d="M-3.6 -6V6.2L5.4 -0.2Z" fill="#fff" stroke="#1c1c1c" stroke-width="0.7" stroke-linejoin="round"/></svg>
<svg class="abs" style="left:28.5px;top:187.5px" width="4" height="4" viewBox="0 0 4 4"><path d="M4 0V4H0Z" fill="#6a6a6a"/></svg>
<svg class="abs" style="left:7.0px;top:197.0px" width="24" height="24" viewBox="-12.0 -12.0 24 24"><path d="M-6.2 8.4C-6.2 0 -2 -4.8 7.4 -4.8" fill="none" stroke="#d0d0d0" stroke-width="1.1"/><path d="M-8 -8.6L0.8 1.8" stroke="#3f97e6" stroke-width="1.1"/><rect x="-4.6" y="-3.6" width="2.6" height="2.6" fill="#3f97e6" stroke="#bfe0ff" stroke-width="0.5"/><circle cx="4.6" cy="-4.8" r="1.5" fill="#fff"/><circle cx="-6.2" cy="6.6" r="1.5" fill="#fff"/><path d="M4.6 -4.8H8M-6.2 6.6V10" stroke="#fff" stroke-width="1"/></svg>
<svg class="abs" style="left:7.300000000000001px;top:224.3px" width="24" height="24" viewBox="-12.0 -12.0 24 24"><g transform="rotate(45)"><path d="M-3.4 -3.2H3.4L4 1.5C3.4 5 1.4 8 0 10.6C-1.4 8 -3.4 5 -4 1.5Z" fill="#f1b938"/><path d="M-3.4 -3.2H0V10.6C-1.4 8 -3.4 5 -4 1.5Z" fill="#fbd977"/><path d="M0 3V10.6" stroke="#7a5a12" stroke-width="0.7"/><circle cx="0" cy="2.6" r="0.9" fill="#7a5a12"/><rect x="-3.6" y="-5.6" width="7.2" height="2.4" fill="#e8e8e8"/><rect x="-3.6" y="-4.8" width="7.2" height="0.8" fill="#333"/><path d="M-3.2 -5.6V-9C-3.2 -10.4 3.2 -10.4 3.2 -9V-5.6Z" fill="#8a2c1c"/></g></svg>
<svg class="abs" style="left:7.0px;top:253.0px" width="24" height="24" viewBox="-12.0 -12.0 24 24"><path d="M-8.6 7C-5 10 -3 4 0.4 5.8C3 7.4 5 6 7.4 8.4" fill="none" stroke="#9a9a9a" stroke-width="1"/><g transform="rotate(45)"><rect x="-2.1" y="-11" width="4.2" height="2.6" fill="#f08a86"/><rect x="-2.1" y="-8.4" width="4.2" height="1.2" fill="#d8d8d8"/><rect x="-2.1" y="-7.2" width="4.2" height="11.6" fill="#2f8fe6"/><rect x="-2.1" y="-7.2" width="1.5" height="11.6" fill="#1d6fc0"/><path d="M-2.1 4.4H2.1L0 8.6Z" fill="#e7b37a"/><path d="M-0.7 7.2H0.7L0 8.6Z" fill="#333"/></g></svg>
<svg class="abs" style="left:7.0px;top:280.6px" width="24" height="24" viewBox="-12.0 -12.0 24 24"><path d="M-8.8 4.2L-3 9.2" stroke="#d8d8d8" stroke-width="1"/><path d="M-6 7.4C-3 10.4 -1 5.6 2 7.6C4.4 9 6 7 8.4 8" fill="none" stroke="#2a78c8" stroke-width="1.5"/><g transform="rotate(45)"><path d="M-1.6 -11.4C-1.6 -12.4 1.6 -12.4 1.6 -11.4L1.9 -5.8H-1.9Z" fill="#e8303a"/><rect x="-2" y="-5.8" width="4" height="1.6" fill="#cfcfcf"/><path d="M-2.4 -4.2H2.4C4.6 -1 4.4 3.6 0.4 6.6C-3.6 4.6 -4.6 -1 -2.4 -4.2Z" fill="#9a5a20"/><path d="M-2.4 -4.2H0C-1.6 -1 -1.8 3 0.4 6.6C-3.6 4.6 -4.6 -1 -2.4 -4.2Z" fill="#c07a34"/></g></svg>
<div class="abs" style="left:11.4px;top:312.8px;width:15.8px;height:15.8px;border-radius:50%;background:radial-gradient(circle,#ddd 0,rgba(200,200,200,0) 55%),conic-gradient(from 90deg,#f33,#fe3,#3e3,#3ee,#44f,#e3e,#f33)"></div>
<svg class="abs" style="left:7.199999999999999px;top:308.6px" width="24" height="24" viewBox="-12.0 -12.0 24 24"><path d="M-0.4 0.6L7.8 -7.6" stroke="#fff" stroke-width="1.2"/><circle cx="-0.4" cy="0.6" r="1.7" fill="#333" stroke="#fff" stroke-width="0.9"/><circle cx="7.8" cy="-7.6" r="1.5" fill="#fff"/></svg>
<svg class="abs" style="left:7.0px;top:337.0px" width="24" height="24" viewBox="-12.0 -12.0 24 24"><defs><linearGradient id="gl" x1="0" y1="0" x2="1" y2="0"><stop offset="0" stop-color="#9fb6dc"/><stop offset="0.5" stop-color="#f4f8ff"/><stop offset="1" stop-color="#8ea8d4"/></linearGradient></defs><path d="M-3.6 -8.6H3.6C4.6 -3 4.4 1.6 0.7 2.6V6.6L3.4 7.8H-3.4L-0.7 6.6V2.6C-4.4 1.6 -4.6 -3 -3.6 -8.6Z" fill="url(#gl)"/></svg>
<svg class="abs" style="left:7.199999999999999px;top:364.4px" width="24" height="24" viewBox="-12.0 -12.0 24 24"><defs><linearGradient id="sky" x1="0" y1="0" x2="0" y2="1"><stop offset="0" stop-color="#2d7fe0"/><stop offset="0.55" stop-color="#8cc4f4"/><stop offset="0.56" stop-color="#1a2c52"/><stop offset="1" stop-color="#0e1830"/></linearGradient></defs><rect x="-8.8" y="-6.8" width="17.6" height="13.6" fill="#d9d9d9"/><rect x="-7.9" y="-5.9" width="15.8" height="11.8" fill="url(#sky)"/><path d="M-7.9 1.4L-3.4 -2.6L0.6 0.8L3.4 -0.8L7.9 2V3.4H-7.9Z" fill="#1a2c52"/><path d="M-4.8 -1.4L-3.4 -2.6L-1.8 -1.2Z" fill="#fff"/><circle cx="4.6" cy="-3.2" r="1.7" fill="#f6b81c"/></svg>
<svg class="abs" style="left:7.0px;top:392.4px" width="24" height="24" viewBox="-12.0 -12.0 24 24"><path d="M-5 -8.2V5H8.2M-8.2 -5H5V8.2" fill="none" stroke="#9c9c9c" stroke-width="1.7"/><path d="M-8 8L8 -8" stroke="#9c9c9c" stroke-width="1.1"/></svg>
<div class="abs" style="left:12.3px;top:425.6px;width:13.8px;height:13.6px;background:linear-gradient(#3b9bee,#1e74c8)"></div>
<div class="abs" style="left:12.3px;top:453px;width:13.8px;height:13.8px;border-radius:50%;background:linear-gradient(#3b9bee,#1e74c8)"></div>
<div class="abs" style="left:12.3px;top:481.2px;width:13.8px;height:13.8px;border-radius:3.2px;background:linear-gradient(#3b9bee,#1e74c8)"></div>
<svg class="abs" style="left:7.0px;top:504.20000000000005px" width="24" height="24" viewBox="-12.0 -12.0 24 24"><polygon points="0.00,-7.60 2.06,-2.03 7.99,-1.80 3.33,1.88 4.94,7.60 0.00,4.30 -4.94,7.60 -3.33,1.88 -7.99,-1.80 -2.06,-2.03" fill="#2f8ae0"/></svg>
<svg class="abs" style="left:28.2px;top:523.6px" width="4" height="4" viewBox="0 0 4 4"><path d="M4 0V4H0Z" fill="#6a6a6a"/></svg>
<div class="t" style="left:11.6px;top:544.4px;line-height:0;font-family:'Liberation Serif',serif;font-size:20px;color:#dcdcdc">A</div>
<svg class="abs" style="left:28.2px;top:551.6px" width="4" height="4" viewBox="0 0 4 4"><path d="M4 0V4H0Z" fill="#6a6a6a"/></svg>
<svg class="abs" style="left:6.600000000000001px;top:560.4px" width="24" height="24" viewBox="-12.0 -12.0 24 24"><g transform="rotate(45)"><path d="M-1.3 -1.5H1.3L1 6.4L0 9.2L-1 6.4Z" fill="#9a9a9a"/><path d="M-1.3 -1.5H0V9.2L-1 6.4Z" fill="#c8c8c8"/><path d="M-2.8 -3.4H2.8V-1.5H-2.8Z" fill="#c98f26"/><path d="M-2.4 -3.4C-3.6 -9.8 3.6 -9.8 2.4 -3.4Z" fill="#e0a030"/></g></svg>
<svg class="abs" style="left:7.0px;top:586.4px" width="24" height="24" viewBox="-12.0 -12.0 24 24"><path d="M-3.6 6.6C-5.6 4.6 -7 2.6 -8 1.4C-8.6 0.2 -7 -0.6 -6 0.4L-3.8 2.4L-5.6 -3.6C-6 -5 -4.4 -5.4 -4 -4.2L-2.4 0.2L-2.4 -5.8C-2.4 -7.2 -0.8 -7.2 -0.7 -5.8L-0.3 -0.2L1 -5.4C1.3 -6.8 2.9 -6.4 2.7 -5L1.9 0.4L3.9 -3C4.6 -4.2 6 -3.4 5.4 -2.2L3.4 2.4C3.4 4.4 2.6 5.6 1.6 6.6Z" fill="#f2c79c" stroke="#d89a5e" stroke-width="0.5"/></svg>

<div class="abs" style="left:58px;top:593px;width:699px;height:12px;background:#323232"></div>
<div class="abs" style="left:233px;top:596px;width:204px;height:6.6px;background:#585858;border-radius:3.3px"></div>

<div class="abs" style="left:756.6px;top:99px;width:13.4px;height:506px;background:#333;"></div>
<div class="abs" style="left:756.6px;top:99px;width:12.0px;height:21px;background:#3c3c3c;"></div>
<svg class="abs" style="left:761px;top:113px" width="4" height="6" viewBox="0 0 4 6"><path d="M1 1L3 3L1 5Z" fill="#ddd"/></svg>
<div class="abs" style="left:759.5px;top:260px;width:6.5px;height:187px;background:#5a5a5a;border-radius:3.5px"></div>
<div class="abs" style="left:770px;top:99px;width:254px;height:21px;background:#292929;"></div>
<div class="abs" style="left:788px;top:101px;width:36px;height:19px;background:#424242;"></div>
<div class="abs" style="left:776.6px;top:105.5px;width:1.2px;height:9.0px;background:#404040;"></div>
<div class="abs" style="left:779.6px;top:105.5px;width:1.2px;height:9.0px;background:#404040;"></div>
<div class="t" id="p_t1" style="left:791px;top:111.19999999999999px;font-size:10.5px;color:#f4f4f4;line-height:0;font-weight:bold;letter-spacing:-0.6px">カラー</div>
<div class="t" id="p_t2" style="left:829.6px;top:111.19999999999999px;font-size:10px;color:#949494;line-height:0;letter-spacing:-0.55px">スウォッチ</div>
<div class="t" id="p_t3" style="left:886px;top:111.19999999999999px;font-size:10px;color:#949494;line-height:0;letter-spacing:-0.45px">境界線</div>
<div class="t" id="p_t4" style="left:923px;top:111.19999999999999px;font-size:10px;color:#949494;line-height:0;letter-spacing:-0.6px">ブラシ</div>
<div class="t" id="p_t5" style="left:960.4px;top:111.19999999999999px;font-size:10px;color:#949494;line-height:0;letter-spacing:-0.2px">外観</div>
<div class="abs" style="left:880.8px;top:105.5px;width:1.4px;height:9.5px;background:#4c4c4c;"></div>
<div class="abs" style="left:917.8px;top:105.5px;width:1.4px;height:9.5px;background:#4c4c4c;"></div>
<div class="abs" style="left:954.8px;top:105.5px;width:1.4px;height:9.5px;background:#4c4c4c;"></div>
<svg class="abs" style="left:1008px;top:104px" width="14" height="12" viewBox="0 0 14 12"><path d="M0.4 2H8.6M0.4 4.3H8.6M0.4 6.6H8.6M0.4 8.9H8.6" stroke="#dedede" stroke-width="1.1"/><path d="M9.6 8.6H13L11.3 11Z" fill="#dedede"/></svg>
<div class="abs" style="left:770px;top:120px;width:254px;height:202px;background:#424242;"></div>
<svg class="abs" style="left:774px;top:124px" width="44" height="44" viewBox="0 0 44 44"><circle cx="18.2" cy="15" r="9.6" fill="none" stroke="#2e2e2e" stroke-width="6.6"/><circle cx="18.2" cy="15" r="9.6" fill="none" stroke="#fafafa" stroke-width="4.6"/>
<path d="M10.6 23.4L13.8 19.9M22.7 10.1L25.9 6.6" stroke="#f0453c" stroke-width="1.4"/>
<circle cx="27.6" cy="27" r="13" fill="#333"/><circle cx="27.6" cy="27" r="11.9" fill="#ff1700"/>
<circle cx="10.8" cy="34" r="5.4" fill="#2e2e2e"/><circle cx="10.8" cy="34" r="4.5" fill="#fafafa"/><path d="M7.8 37.2L13.9 31" stroke="#f0453c" stroke-width="1.1"/>
<path d="M30.4 12.4C31.4 9.6 34.6 9 36.6 11.4L38.6 14.6" fill="none" stroke="#c4c4c4" stroke-width="1.1"/><path d="M28.8 11.4L30.2 14.2L32.4 12.2ZM40.2 13.4L38.9 16.6L36.8 15.2Z" fill="#c4c4c4"/></svg>
<svg class="abs" style="left:822px;top:126px" width="38" height="22" viewBox="0 0 38 22"><g transform="translate(10.6,10.8) rotate(45)"><path d="M-1.3 -1.5H1.3L1 6.4L0 9.4L-1 6.4Z" fill="#9a9a9a"/><path d="M-1.3 -1.5H0V9.4L-1 6.4Z" fill="#c8c8c8"/><path d="M-2.8 -3.4H2.8V-1.5H-2.8Z" fill="#c98f26"/><path d="M-2.4 -3.4C-3.6 -9.8 3.6 -9.8 2.4 -3.4Z" fill="#e0a030"/></g>
<circle cx="27.2" cy="10" r="7.6" fill="#383838"/><circle cx="27.2" cy="10" r="6.5" fill="#000"/></svg>
<div class="abs" style="left:830.0px;top:140.3px;width:148px;height:148px;border-radius:50%;background:conic-gradient(from 90deg,#f00,#ff0,#0f0,#0ff,#00f,#f0f,#f00);-webkit-mask:radial-gradient(circle,transparent 58.6px,#000 59.4px,#000 73.4px,transparent 74.2px);mask:radial-gradient(circle,transparent 58.6px,#000 59.4px,#000 73.4px,transparent 74.2px)"></div>
<svg class="abs" style="left:0px;top:0px" width="1024" height="625" viewBox="0 0 1024 625"><defs><linearGradient id="bw" gradientUnits="userSpaceOnUse" x1="879.15" y1="161.01" x2="870.27" y2="262.47"><stop offset="0" stop-color="#000"/><stop offset="1" stop-color="#fff"/></linearGradient>
<linearGradient id="hu" gradientUnits="userSpaceOnUse" x1="874.71" y1="211.74" x2="962.58" y2="219.42"><stop offset="0" stop-color="#ff1500" stop-opacity="0"/><stop offset="1" stop-color="#ff1500" stop-opacity="1"/></linearGradient></defs>
<polygon points="962.58,219.42 879.15,161.01 870.27,262.47" fill="url(#bw)"/>
<polygon points="962.58,219.42 879.15,161.01 870.27,262.47" fill="url(#hu)"/>
<circle cx="962.8" cy="219.3" r="3.7" fill="none" stroke="#fff" stroke-width="1.1"/><circle cx="971.2" cy="219.3" r="3.7" fill="none" stroke="#fff" stroke-width="1.1"/></svg>
<div class="t" id="p_h" style="left:777px;top:249.4px;font-size:11px;color:#d6d6d6;line-height:0;">H: 5</div>
<div class="t" style="left:777.6px;top:262.0px;font-size:11px;color:#d6d6d6;line-height:0;">S: 100</div>
<div class="t" style="left:778px;top:274.6px;font-size:11px;color:#d6d6d6;line-height:0;">L: 50</div>
<div class="t" id="p_op" style="left:777px;top:291.6px;font-size:10px;color:#d6d6d6;line-height:0;letter-spacing:-0.3px">不透明度</div>
<div class="abs" style="left:778.6px;top:300.8px;width:12.4px;height:12.4px;border-radius:50%;background:#ff1700"></div>
<div class="abs chk" style="left:797.5px;top:303.2px;width:151.5px;height:7.6px;border-radius:3.8px"></div>
<div class="abs" style="left:940.8px;top:302px;width:10px;height:10px;border-radius:50%;background:#2a2a2a;box-shadow:inset 0 0 0 1.5px #f4f4f4"></div>
<div class="abs fld" style="left:961px;top:297.6px;width:57px;height:18.8px"></div>
<div class="abs farr" style="left:1002.5px;top:298.6px;width:14.5px;height:16.8px"></div>
<svg class="abs" style="left:1006px;top:303.4px" width="8" height="8" viewBox="0 0 8 8"><path d="M1.1 1.7H6.9L4 6.7Z" fill="#e0e0e0"/></svg>
<div class="t" id="p_100" style="left:964.6px;top:308.0px;font-size:11px;color:#f0f0f0;line-height:0;">100 %</div>
<div class="abs" style="left:770px;top:322px;width:254px;height:24px;background:#2a2a2a;"></div>
<div class="abs" style="left:770px;top:324.5px;width:254px;height:21.5px;background:#292929;"></div>
<div class="abs" style="left:829px;top:326.6px;width:54.4px;height:19.4px;background:#414141;"></div>
<div class="abs" style="left:776.6px;top:331px;width:1.2px;height:9px;background:#404040;"></div>
<div class="abs" style="left:779.6px;top:331px;width:1.2px;height:9px;background:#404040;"></div>
<div class="t" id="p_u1" style="left:791.6px;top:336.40000000000003px;font-size:10px;color:#949494;line-height:0;letter-spacing:-0.55px">レイヤ</div>
<div class="t" id="p_u2" style="left:831px;top:336.40000000000003px;font-size:10.5px;color:#f4f4f4;line-height:0;font-weight:bold;letter-spacing:-0.75px">エフェクト</div>
<div class="t" id="p_u3" style="left:889px;top:336.40000000000003px;font-size:10px;color:#949494;line-height:0;letter-spacing:-0.35px">スタイ</div>
<div class="t" id="p_u4" style="left:929.6px;top:336.40000000000003px;font-size:10px;color:#949494;line-height:0;letter-spacing:-0.35px">テキス</div>
<div class="t" id="p_u5" style="left:969px;top:336.40000000000003px;font-size:10px;color:#949494;line-height:0;letter-spacing:-0.9px">ストッ</div>
<div class="abs" style="left:924.8px;top:330.5px;width:1.4px;height:9.5px;background:#4c4c4c;"></div>
<div class="abs" style="left:964.3px;top:330.5px;width:1.4px;height:9.5px;background:#4c4c4c;"></div>
<div class="abs" style="left:770px;top:346px;width:254px;height:28px;background:#414141;"></div>
<div class="t" id="p_fill" style="left:777px;top:362.0px;font-size:10.5px;color:#dcdcdc;line-height:0;letter-spacing:-0.5px">塗りつぶしの不透明度:</div>
<div class="abs fld" style="left:884px;top:351.4px;width:46.4px;height:19.2px;border-radius:3px"></div>
<div class="t" style="left:886.8px;top:362.0px;font-size:11.3px;color:#f0f0f0;line-height:0;">100 %</div>
<svg class="abs" style="left:920px;top:357px" width="8" height="8" viewBox="0 0 8 8"><path d="M1.6 2H6.4L4 6Z" fill="#e0e0e0"/></svg>
<div class="abs" style="left:770px;top:373.4px;width:254px;height:1.0px;background:#2b2b2b;"></div>
<div class="abs" style="left:770px;top:374.4px;width:240px;height:207.6px;background:#414141;"></div>
<div class="abs" style="left:1010px;top:374.4px;width:14px;height:207.6px;background:#333;"></div>
<div class="abs" style="left:1014px;top:441px;width:7px;height:94px;background:#5c5c5c;border-radius:3.5px"></div>
<svg class="abs" style="left:781px;top:380.2px" width="9" height="10" viewBox="0 0 9 10"><path d="M1 0.8L8 5L1 9.2Z" fill="#8a8a8a"/></svg>
<div class="abs" style="left:795.4px;top:378.4px;width:13.2px;height:13.2px;border-radius:3px;background:#323232;box-shadow:inset 0 0 0 1px #272727,0 1px 0 #4a4a4a"></div>
<div class="t" id="p_r1" style="left:813px;top:385.8px;font-size:10px;color:#dcdcdc;line-height:0;letter-spacing:-0.3px">内側の光彩</div>
<div class="abs" style="left:771px;top:399.6px;width:237px;height:1.0px;background:#2f2f2f;"></div>
<svg class="abs" style="left:780.6px;top:413.7px" width="10" height="9" viewBox="0 0 10 9"><path d="M0.6 1H9.4L5 8.4Z" fill="#8a8a8a"/></svg>
<div class="abs" style="left:795.4px;top:411.4px;width:13.2px;height:13.2px;border-radius:3px;background:#323232;box-shadow:inset 0 0 0 1px #272727,0 1px 0 #4a4a4a"></div>
<svg class="abs" style="left:795.4px;top:411px" width="14" height="14" viewBox="0 0 14 14"><path d="M3.4 7.4L5.8 10.4L10.4 2.8" fill="none" stroke="#fff" stroke-width="1.6"/></svg>
<div class="t" id="p_r2" style="left:813px;top:418.8px;font-size:10px;color:#dcdcdc;line-height:0;letter-spacing:-0.4px">アウトライン</div>
<svg class="abs" style="left:983px;top:411px" width="13" height="13" viewBox="0 0 13 13"><g transform="translate(6.5,6.5)" fill="#c6c6c6"><rect x="-1.5" y="-6.4" width="3" height="3" transform="rotate(0)"/><rect x="-1.5" y="-6.4" width="3" height="3" transform="rotate(45)"/><rect x="-1.5" y="-6.4" width="3" height="3" transform="rotate(90)"/><rect x="-1.5" y="-6.4" width="3" height="3" transform="rotate(135)"/><rect x="-1.5" y="-6.4" width="3" height="3" transform="rotate(180)"/><rect x="-1.5" y="-6.4" width="3" height="3" transform="rotate(225)"/><rect x="-1.5" y="-6.4" width="3" height="3" transform="rotate(270)"/><rect x="-1.5" y="-6.4" width="3" height="3" transform="rotate(315)"/><circle r="4.4"/><circle r="1.9" fill="#414141"/></g></svg>
<div class="abs" style="left:771px;top:433px;width:237px;height:105.4px;background:#383838;"></div>
<div class="abs" style="left:771px;top:432.4px;width:237px;height:1.0px;background:#303030;"></div>
<svg class="abs" style="left:794px;top:428.6px" width="14" height="6" viewBox="0 0 14 6"><path d="M0.5 5.5L7 0.6L13.5 5.5Z" fill="#383838"/><path d="M0.5 5L7 0.6L13.5 5" fill="none" stroke="#303030" stroke-width="0.9"/></svg>
<div class="t" style="right:206.60000000000002px;top:460.20000000000005px;font-size:10px;color:#d2d2d2;line-height:0;letter-spacing:-0.4px">カラー</div>
<div class="abs" style="left:823px;top:450.8px;width:52px;height:18px;background:#2a2a2a;border-radius:1.5px"></div>
<div class="abs" style="left:824px;top:451.8px;width:50px;height:16px;background:#12891f"></div>
<div class="t" style="right:206.60000000000002px;top:487.0px;font-size:10px;color:#d2d2d2;line-height:0;letter-spacing:-0.3px">不透明度</div>
<div class="abs chk" style="left:822.6px;top:481.9px;width:117.39999999999998px;height:8.6px;border-radius:4.3px"></div>
<div class="abs" style="left:931.2px;top:481.2px;width:10px;height:10px;border-radius:50%;background:#2a2a2a;box-shadow:inset 0 0 0 1.5px #f4f4f4"></div>
<div class="abs fld" style="left:948.4px;top:478.2px;width:43.6px;height:15.800000000000011px"></div>
<div class="t" style="left:951.8px;top:486.90000000000003px;font-size:11.4px;color:#e8e8e8;line-height:0;">100 %</div>
<div class="t" style="right:206.60000000000002px;top:512.2px;font-size:10px;color:#d2d2d2;line-height:0;letter-spacing:0.6px">半径</div>
<div class="abs" style="left:823px;top:510.2px;width:118px;height:2.0px;background:#2c2c2c;border-radius:1px;box-shadow:0 1px 0 #444"></div>
<div class="abs" style="left:823px;top:509.8px;width:67px;height:2.6px;background:#a9cbf5;border-radius:1.3px"></div>
<div class="abs" style="left:885.6px;top:506.6px;width:9.2px;height:9.2px;border-radius:50%;background:radial-gradient(circle,#7d8fe8 0,#7d8fe8 1.1px,#f4f4f4 1.8px)"></div>
<div class="abs fld" style="left:948.4px;top:503.2px;width:43.6px;height:15.800000000000011px"></div>
<div class="t" style="left:951.8px;top:511.90000000000003px;font-size:11.4px;color:#e8e8e8;line-height:0;">22 px</div>
<div class="abs" style="left:771px;top:538.4px;width:237px;height:1.0px;background:#2f2f2f;"></div>
<svg class="abs" style="left:781px;top:550.2px" width="9" height="10" viewBox="0 0 9 10"><path d="M1 0.8L8 5L1 9.2Z" fill="#8a8a8a"/></svg>
<div class="abs" style="left:795.4px;top:548.4px;width:13.2px;height:13.2px;border-radius:3px;background:#323232;box-shadow:inset 0 0 0 1px #272727,0 1px 0 #4a4a4a"></div>
<div class="t" id="p_r3" style="left:813px;top:556.0px;font-size:11px;color:#dcdcdc;line-height:0;">3D</div>
<div class="abs" style="left:771px;top:569.8px;width:237px;height:1.0px;background:#2f2f2f;"></div>
<div class="abs" style="left:795.4px;top:581.4px;width:13.2px;height:13.2px;border-radius:3px;background:#323232;box-shadow:inset 0 0 0 1px #272727,0 1px 0 #4a4a4a"></div>
<div class="abs" style="left:770px;top:582px;width:254px;height:23px;background:#282828;"></div>
<div class="abs" style="left:788px;top:584px;width:26px;height:21px;background:#414141;"></div>
<div class="abs" style="left:776.6px;top:589.5px;width:1.2px;height:9.0px;background:#404040;"></div>
<div class="abs" style="left:779.6px;top:589.5px;width:1.2px;height:9.0px;background:#404040;"></div>
<div class="t" id="p_b1" style="left:791px;top:595.2px;font-size:10.5px;color:#f4f4f4;line-height:0;font-weight:bold;letter-spacing:-0.6px">変換</div>
<div class="t" id="p_b2" style="left:819px;top:595.2px;font-size:10px;color:#949494;line-height:0;letter-spacing:-0.5px">履歴</div>
<div class="abs" style="left:842.4px;top:589.5px;width:1.4px;height:9.5px;background:#4c4c4c;"></div>
<div class="t" id="p_b3" style="left:847.6px;top:595.2px;font-size:10px;color:#949494;line-height:0;letter-spacing:-0.6px">ナビゲータ</div>
<div class="abs" style="left:770px;top:605px;width:254px;height:20px;background:#333;"></div>

<div class="abs" style="left:0;top:605px;width:770px;height:20px;background:#333"></div>
<div class="t" id="status" style="left:19.6px;top:616px;line-height:0;font-size:10px;color:#c4c4c4"><span id="s0" style="font-size:11px">'AFFINITY'</span><span style="letter-spacing:-0.11px">が選択されています。 </span><b id="s1" style="letter-spacing:-0.7px">ドラッグ</b><span style="letter-spacing:-0.14px">で選択項目を移動します。</span><b id="s2" style="letter-spacing:-0.7px">クリック</b><span style="letter-spacing:-0.19px">で別のオブジェクトを選択します。何もない領域を</span><b id="s3" style="letter-spacing:-0.63px">クリック</b><span style="letter-spacing:-0.59px">すると、選択が解除されます。</span></div>

</div>
</body></html>
